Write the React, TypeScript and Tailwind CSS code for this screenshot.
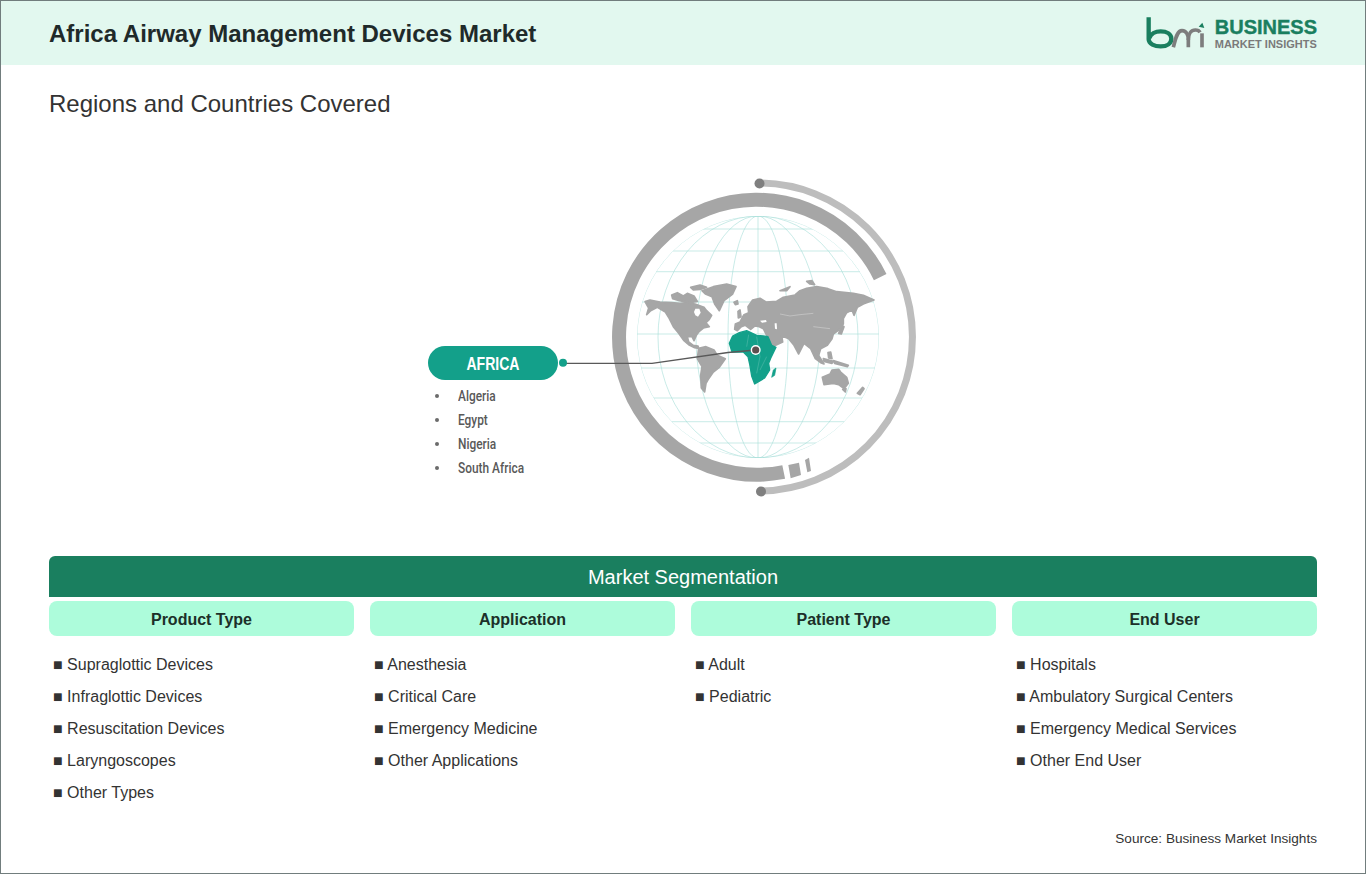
const columns = [
  {
    title: "Product Type",
    items: ["Supraglottic Devices", "Infraglottic Devices", "Resuscitation Devices", "Laryngoscopes", "Other Types"],
  },
  {
    title: "Application",
    items: ["Anesthesia", "Critical Care", "Emergency Medicine", "Other Applications"],
  },
  {
    title: "Patient Type",
    items: ["Adult", "Pediatric"],
  },
  {
    title: "End User",
    items: ["Hospitals", "Ambulatory Surgical Centers", "Emergency Medical Services", "Other End User"],
  },
];

const countries = ["Algeria", "Egypt", "Nigeria", "South Africa"];

const latitudes = [229, 251, 271.7, 302, 334, 368, 398, 421.7, 443];
const meridians = [30, 62, 100, 121];

function polar(cx: number, cy: number, r: number, deg: number) {
  const a = (deg * Math.PI) / 180;
  return `${(cx + r * Math.cos(a)).toFixed(1)} ${(cy - r * Math.sin(a)).toFixed(1)}`;
}

function Logo() {
  return (
    <div className="flex items-center gap-[9px]">
      <svg width="60" height="36" viewBox="0 0 180 108" fill="none">
        <g transform="translate(-78 -45)">
          <path d="M86 52 V118 C86 132 104 139 122 139 C142 139 154 130 154 116 C154 102 140 94 122 94 C106 94 92 102 88 114" stroke="#1a7f5f" strokeWidth="13" />
          <path d="M160 142 C166 120 170 92 186 92 C200 92 205 106 205 120 V142" stroke="#7d7d7d" strokeWidth="11" />
          <path d="M205 120 C205 100 214 90 226 90 C234 90 238 93 240 97" stroke="#7d7d7d" strokeWidth="11" />
          <path d="M246 100 V142" stroke="#7d7d7d" strokeWidth="11" />
          <path d="M236 80 L247 68 L253 84 Z" fill="#1a7f5f" />
        </g>
      </svg>
      <div className="flex flex-col font-['Liberation_Sans',sans-serif] font-bold">
        <span className="text-[20px] leading-[21px] text-[#1a7f5f] [-webkit-text-stroke:0.4px_#1a7f5f]">BUSINESS</span>
        <span className="text-[11px] leading-[12px] text-[#7a7a7a]">MARKET INSIGHTS</span>
      </div>
    </div>
  );
}

function Globe() {
  return (
    <svg width="370" height="330" viewBox="558 170 370 330" fill="none" className="shrink-0">
      <defs>
        <clipPath id="globe-clip">
          <circle cx="758" cy="337" r="121" />
        </clipPath>
      </defs>

      {/* rings */}
      <path
        d={`M ${polar(756.5, 337.2, 137.5, 25.9)} A 137.5 137.5 0 1 0 ${polar(756.5, 337.2, 137.5, -78.6)}`}
        stroke="#a6a6a6"
        strokeWidth="14"
      />
      <path d="M 758 183 A 154 154 0 0 1 759 491" stroke="#bdbdbd" strokeWidth="7" />
      <circle cx="759.5" cy="183.5" r="5" fill="#7f7f7f" />
      <circle cx="761" cy="491.5" r="5" fill="#7f7f7f" />

      {/* graticule */}
      <g clipPath="url(#globe-clip)" stroke="#a4ded6" strokeWidth="0.6">
        {latitudes.map((y) => {
          const half = Math.sqrt(121 * 121 - (y - 337) * (y - 337));
          return <line key={y} x1={758 - half} x2={758 + half} y1={y} y2={y} />;
        })}
        {meridians.map((rx) => (
          <ellipse key={rx} cx="758" cy="337" rx={rx} ry="121" />
        ))}
        <line x1="758" x2="758" y1="216" y2="458" />
      </g>

      {/* map, drawn in 3x coordinates */}
      <g transform="translate(600 170) scale(0.33333)">
        {/* ring chips */}
        <path d="M565 885 L597 878 L603 915 L572 925 Z M615 870 L627 863 L633 903 L622 907 Z" fill="#a6a6a6" />

        <g fill="#a6a6a6" stroke="#a6a6a6" strokeWidth="5" strokeLinejoin="round">
          {/* north america */}
          <path d="M135 395 L150 390 L180 396 L215 398 L240 400 L262 398 L285 402 L312 412 L320 422 L335 436 L328 448 L318 458 L328 470 L310 474 L298 484 L290 494 L282 512 L276 500 L262 500 L266 516 L280 526 L294 528 L296 535 L284 533 L266 524 L252 512 L236 490 L220 470 L208 446 L196 426 L172 412 L152 422 L140 434 L146 414 Z" />
          {/* arctic islands */}
          <path d="M215 375 L232 368 L250 378 L262 370 L282 378 L292 394 L270 398 L238 392 L218 386 Z" />
          <path d="M272 352 L300 345 L320 352 L300 358 L280 360 Z" />
          {/* greenland */}
          <path d="M306 362 L340 350 L380 342 L408 350 L398 372 L372 392 L358 422 L344 402 L336 380 L316 372 Z" />
          {/* south america */}
          <path d="M296 535 L318 530 L342 540 L352 556 L376 566 L358 592 L340 606 L326 626 L318 640 L314 666 L304 654 L302 616 L306 590 L292 566 Z" />
          {/* iceland, uk */}
          <path d="M402 397 L412 392 L414 402 L406 404 Z" />
          <path d="M414 424 L420 420 L423 440 L415 444 Z" />
          {/* eurasia */}
          <path d="M404 478 L406 462 L420 456 L426 444 L432 434 L446 428 L444 410 L458 390 L480 385 L498 396 L530 394 L550 382 L585 375 L600 362 L620 355 L650 350 L684 356 L710 365 L760 370 L790 376 L822 390 L790 402 L772 412 L762 436 L756 420 L740 428 L730 446 L730 462 L714 482 L700 492 L696 506 L682 526 L662 536 L656 556 L672 582 L662 578 L646 566 L632 536 L612 520 L596 552 L582 526 L566 506 L545 497 L548 516 L514 532 L500 496 L490 476 L478 470 L464 468 L452 478 L436 466 L424 470 L412 482 Z" />
          {/* islands */}
          <path d="M716 490 L726 466 L732 470 L724 492 Z" />
          <path d="M620 334 L636 332 L644 344 L630 342 Z" />
          <path d="M540 362 L570 350 L560 362 Z" />
          <path d="M670 566 L700 574 L696 580 L672 574 Z" />
          <path d="M700 572 L745 586 L742 590 L704 580 Z" />
          <path d="M684 548 L692 546 L696 566 L686 564 Z" />
          {/* australia */}
          <path d="M667 622 L690 612 L696 600 L716 598 L722 606 L740 622 L745 640 L732 656 L716 644 L700 640 L672 644 Z" />
          <path d="M728 658 L738 656 L736 666 Z" />
          <path d="M772 670 L788 652 L792 656 L780 674 Z" />
        </g>

        {/* water cut out of the land */}
        <g fill="#ffffff">
          <path d="M286 416 L298 416 L302 428 L294 440 L286 436 L282 426 Z" />
          <path d="M480 452 L498 450 L500 456 L486 458 Z" />
          <path d="M524 460 L530 460 L531 478 L525 476 Z" />
        </g>
        <path d="M540 432 L570 438 L600 434 L640 430 M640 470 L690 476" stroke="#ffffff" strokeWidth="1.5" opacity="0.6" />

        {/* africa */}
        <path d="M388 520 L398 498 L418 488 L440 482 L470 496 L490 498 L504 500 L515 526 L528 532 L512 565 L506 580 L509 600 L494 624 L464 642 L455 618 L449 582 L444 560 L430 546 L396 546 Z" fill="#13a08a" stroke="#13a08a" strokeWidth="4" strokeLinejoin="round" />
        <path d="M520 600 L528 594 L524 616 L515 622 Z" fill="#13a08a" stroke="#13a08a" strokeWidth="2" />
        <path d="M446 494 L440 530 M470 500 L480 560 L470 610 M500 560 L480 600" stroke="#ffffff" strokeWidth="1" opacity="0.5" />
      </g>

      {/* connector */}
      <path d="M565 363.3 H652 L728 352.5 L756 350" stroke="#595959" strokeWidth="1.3" />
      <circle cx="563" cy="362.7" r="4" fill="#13a08a" />
      <circle cx="755.7" cy="350" r="5" fill="#ffffff" />
      <circle cx="755.7" cy="350" r="3.6" fill="#5d4f4f" />
    </svg>
  );
}

export default function App() {
  return (
    <div className="h-[874px] border border-[#717d7d] bg-white font-['Liberation_Sans',Arial,sans-serif] text-[#333333]">
      <header className="flex h-[64px] items-center justify-between bg-[#e2f8ef] px-12">
        <h1 className="pt-[2px] text-[24px] font-bold text-[#1f2a2a]">Africa Airway Management Devices Market</h1>
        <Logo />
      </header>

      <div className="px-12">
        <h2 className="pt-[22px] text-[24px] leading-[34px]">Regions and Countries Covered</h2>

        <div className="mt-[49px] flex h-[330px]">
          <div className="ml-[379px] w-[130px] shrink-0 pt-[176px]">
            <div className="flex h-[34px] items-center justify-center rounded-[17px] bg-[#13a08a] pt-[2px]">
              <span className="scale-x-[0.78] text-[18px] font-bold text-white">AFRICA</span>
            </div>
            <ul className="mt-[4px]">
              {countries.map((c) => (
                <li key={c} className="flex h-[24px] items-center text-[#595959]">
                  <span className="ml-[7px] h-[4px] w-[4px] rounded-full bg-[#6b6b6b]" />
                  <span className="ml-[19px] origin-left scale-x-[0.85] whitespace-nowrap font-['Roboto',sans-serif] text-[14px] font-medium">
                    {c}
                  </span>
                </li>
              ))}
            </ul>
          </div>
          <Globe />
        </div>

        <div className="mt-[56px] flex h-[41px] items-center justify-center rounded-t-md bg-[#1a7f5f] text-[20px] text-white">
          Market Segmentation
        </div>

        <div className="mt-[4px] grid grid-cols-4 gap-4">
          {columns.map((col) => (
            <div key={col.title}>
              <div className="flex h-[35px] items-center justify-center rounded-lg bg-[#adfcdb] pt-[2px] text-[16px] font-bold text-[#1c3029]">
                {col.title}
              </div>
              <ul className="mt-[13px] pl-[4px]">
                {col.items.map((item) => (
                  <li key={item} className="h-[32px] text-[16px] leading-[32px]">
                    ■ {item}
                  </li>
                ))}
              </ul>
            </div>
          ))}
        </div>

        <p className="mt-[21px] text-right text-[13.6px] leading-[18px]">Source: Business Market Insights</p>
      </div>
    </div>
  );
}
